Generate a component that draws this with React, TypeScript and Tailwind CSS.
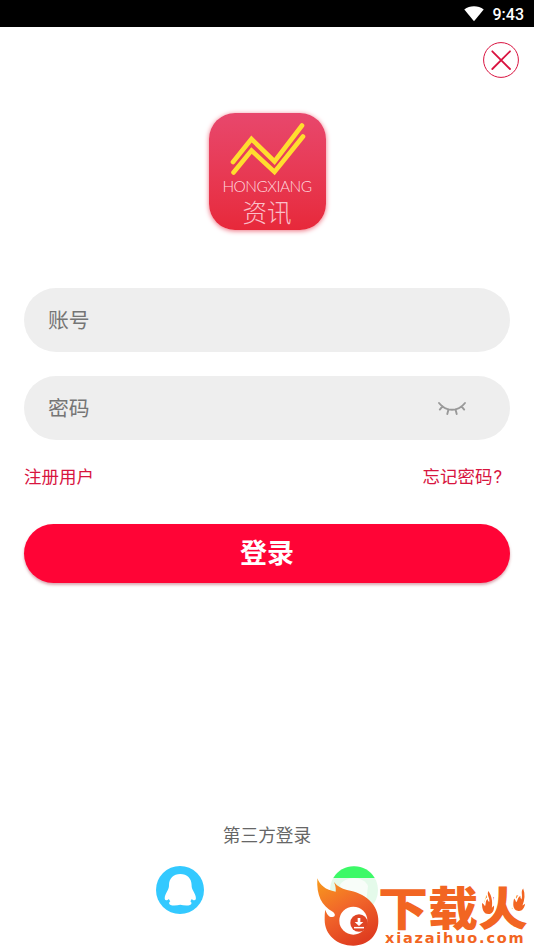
import * as React from 'react';

const CloseIcon: React.FC = () => (
  <svg viewBox="0 0 36 36" className="size-9" fill="none" stroke="#d9123f">
    <circle cx="18" cy="18" r="17.4" strokeWidth="1" />
    <path d="M9.3 9.3 27 27M27 9.3 9.3 27" strokeWidth="1.8" strokeLinecap="round" />
  </svg>
);

const ClosedEyeIcon: React.FC = () => (
  <svg viewBox="0 0 30 16" className="h-4 w-[30px]" fill="none" stroke="#999" strokeWidth="1.9" strokeLinecap="round">
    <path d="M2 3C9 12 21 12 28 3M5.5 6.3 2.8 9.6M11.5 9.3 10.3 14M18.5 9.3l1.2 4.7M24.5 6.3l2.7 3.3" />
  </svg>
);

const QQIcon: React.FC = () => (
  <svg viewBox="0 0 48 48" className="size-12">
    <circle cx="24" cy="24" r="24" fill="#33c9ff" />
    <path
      d="M24.3 8C17.5 8 13 12.6 13 19c0 2-.4 3.6-1.3 5.2-1.7 3-3 5.5-3 8 0 1.3.6 2 1.5 2 1 0 1.9-.6 2.7-1.3.4.9.8 1.6 1.4 2.3-.9.7-1.2 1.3-1.200 2 0 1.600 2.300 2.300 5.100 2.300 2.400 0 4.400-.3 6.100-.8 1.700.5 3.700.8 6.100.8 2.800 0 5.100-.7 5.100-2.300 0-.7-.3-1.300-1.200-2 .6-.7 1-1.400 1.400-2.300.8.700 1.700 1.300 2.700 1.300.9 0 1.500-.7 1.500-2 0-2.500-1.300-5-3-8-.9-1.600-1.300-3.200-1.300-5.200 0-6.400-4.500-11-11.300-11Z"
      fill="#fff"
    />
  </svg>
);

const WechatIcon: React.FC = () => (
  <svg viewBox="0 0 48 48" className="size-12">
    <circle cx="24" cy="24" r="24" fill="#e4faea" />
    <path d="M3.3 12a24 24 0 0 1 41.4 0Z" fill="#3cf967" />
    <path d="M10 19c2-4 8-7 14-7s12 3 14 8l-2 16-24-6Z" fill="#f8fdf9" />
  </svg>
);

const AppLogo: React.FC = () => (
  <div className="flex h-[117px] w-[117px] flex-col items-center rounded-[26px] bg-gradient-to-b from-[#e8476c] to-[#e7283a] text-[#ffd9df] shadow-[0_1px_5px_#ee7180]">
    <svg viewBox="0 0 117 68" className="h-[68px] w-[117px] shrink-0" fill="none" stroke="#ffdd2f" strokeWidth="4.6" strokeLinecap="round" strokeLinejoin="miter">
      <path d="M24 49 42.5 26 65.5 48.5 93 12.5" />
      <path d="M24.5 59.5 42.5 37.5 65.5 59 94 23.5" />
    </svg>
    <span className="-mt-[2px] whitespace-nowrap font-['Lato','Liberation_Sans',sans-serif] text-[15.5px] leading-[14px] font-light tracking-[-0.55px]">
      HONGXIANG
    </span>
    <span className="mt-[5px] font-['Noto_Sans_CJK_SC',sans-serif] text-[24.5px] leading-[28px] font-light text-[#fbc0ca]">资讯</span>
  </div>
);

const FlameLogo: React.FC = () => (
  <svg viewBox="0 0 192 207" className="h-[69px] w-16 shrink-0">
    <defs>
      <linearGradient id="flame" x1="0.1" y1="0" x2="0.6" y2="1">
        <stop offset="0" stopColor="#f7971e" />
        <stop offset="0.5" stopColor="#f1652a" />
        <stop offset="1" stopColor="#df3d20" />
      </linearGradient>
    </defs>
    <path
      d="M4 4c8 20 24 35 55 40 1-9 0-17-5-29 10 13 22 20 39 24 28 6 49 13 67 31 18 17 27 38 27 63 0 42-31 73-75 73-49 0-86-33-86-77 0-12 0-22 2-31 5 16 12 23 21 22 10-1 10-10 1-16C17 86 1 56 4 4Z"
      fill="url(#flame)"
    />
    <circle cx="112" cy="131" r="42" fill="#fff" />
    <circle cx="129" cy="138" r="26" fill="#df4524" />
    <path d="M125 123h8v12h9l-13 12-13-12h9Z" fill="#fff" />
    <path d="M114 152h30" stroke="#fff" strokeWidth="4.5" />
  </svg>
);

const SmallFlame: React.FC<{ className: string }> = ({ className }) => (
  <svg viewBox="0 0 28 56" className={className} fill="#f26522" stroke="#fff" strokeWidth="8" strokeLinejoin="round" preserveAspectRatio="none" overflow="visible">
    <path
      style={{ paintOrder: 'stroke' }}
      d="M15 0c-5 10 4 16 2 27-2-2-4-4-4-8-6 6-3 12-6 18-2-3-3-6-7-8 0 14 3 27 15 27 9 0 14-8 13-21-2 2-4 4-5 6 2-15 0-29-8-41Z"
    />
  </svg>
);

const Watermark: React.FC = () => (
  <div className="absolute top-[877px] left-[316px] flex w-[218px] text-[#f26522]">
    <FlameLogo />
    <div className="relative -ml-[2px] flex flex-col">
      <span className="-mt-[1px] origin-[50%_52px] scale-y-[0.92] whitespace-nowrap font-['Noto_Sans_CJK_SC',sans-serif] text-[50px] leading-[54px] font-black">
        下载火
      </span>
      <SmallFlame className="absolute top-[14px] left-[104px] h-[23px] w-[12px]" />
      <SmallFlame className="absolute top-[11px] left-[136px] h-[23px] w-[12px] rotate-[14deg]" />
      <span className="ml-[7px] whitespace-nowrap font-['DejaVu_Sans',sans-serif] text-[14.5px] leading-[16px] font-bold tracking-[1.8px]">
        xiazaihuo.com
      </span>
    </div>
  </div>
);

export default function App() {
  return (
    <div className="relative flex h-[949px] w-[534px] flex-col overflow-hidden bg-white font-['Noto_Sans_CJK_SC',sans-serif]">
      <header className="flex h-[27px] shrink-0 items-center justify-end gap-[9px] bg-black pr-[10px] text-white">
        <svg viewBox="0 0 20 16" className="h-4 w-5" fill="#fff">
          <path d="M.3 3.5C5.7-.9 14.3-.9 19.7 3.5L10 15.2Z" />
        </svg>
        <span className="pt-[2px] font-['Roboto',sans-serif] text-[16px] leading-6 font-medium">9:43</span>
      </header>

      <div className="flex justify-end pt-[15px] pr-[15px]">
        <button type="button" aria-label="关闭">
          <CloseIcon />
        </button>
      </div>

      <div className="mt-[35px] flex justify-center">
        <AppLogo />
      </div>

      <form className="mx-6 mt-[58px] flex flex-col">
        <div className="flex h-16 items-center rounded-full bg-[#eee] px-6 pb-[3px]">
          <span className="text-[20.8px] leading-8 text-[#757575]">账号</span>
        </div>
        <div className="mt-6 flex h-16 items-center justify-between rounded-full bg-[#eee] pr-[43px] pl-6">
          <span className="pb-[3px] text-[20.8px] leading-8 text-[#757575]">密码</span>
          <ClosedEyeIcon />
        </div>
        <div className="mt-[23px] flex h-[26px] justify-between pr-[8px] text-[17.5px] leading-[26px] text-[#d8153f]">
          <a>注册用户</a>
          <a>
            忘记密码<span className="pl-[1px] font-['Roboto',sans-serif] text-[18px]">?</span>
          </a>
        </div>
        <button
          type="button"
          className="mt-[35px] h-[59px] rounded-full bg-[#ff0436] pb-[3px] text-[27px] leading-10 font-bold text-white shadow-[0_2px_3px_rgba(150,0,30,0.35)]"
        >
          登录
        </button>
      </form>

      <div className="mt-[238px] text-center text-[17.7px] leading-[26px] text-[#666]">第三方登录</div>
      <div className="mt-[19px] flex gap-[126px] pl-[156px]">
        <QQIcon />
        <WechatIcon />
      </div>

      <Watermark />
    </div>
  );
}
